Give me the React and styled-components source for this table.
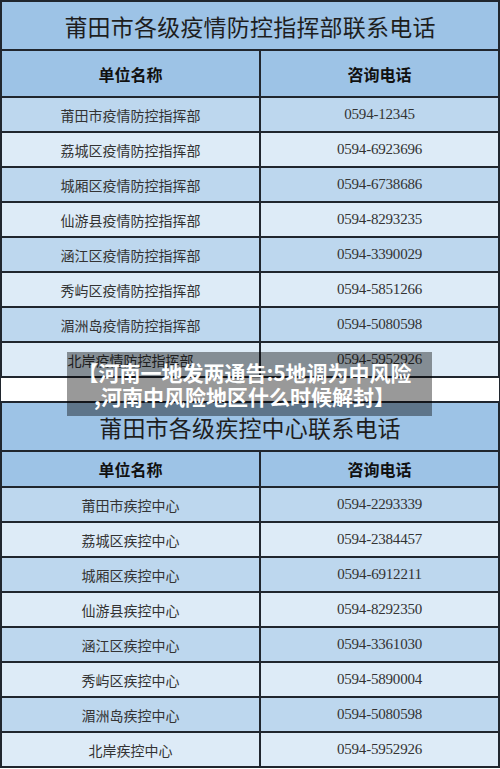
import React from "react";
import styled, { createGlobalStyle } from "styled-components";

const Global = createGlobalStyle`
  html, body { margin: 0; padding: 0; background: #ffffff; }
  body { font-family: "Noto Sans CJK SC", "Noto Sans", sans-serif; }
`;

const LINE = "#20262e";

const Page = styled.div`
  position: relative;
  width: 500px;
`;

const Table = styled.section`
  border: 2px solid ${LINE};
  display: flex;
  flex-direction: column;
`;

const TitleRow = styled.div`
  height: 47px;
  background: #9dc3e6;
  border-bottom: 2px solid ${LINE};
  display: flex;
  align-items: center;
  justify-content: center;
  font-size: 23px;
  color: #1e1e1e;
  font-weight: 400;
  letter-spacing: 0.2px;
`;

const Row = styled.div`
  display: grid;
  grid-template-columns: 259px 1fr;
  height: ${(p) => p.$h}px;
  background: ${(p) => p.$bg};
  border-bottom: 2px solid ${LINE};
  &:last-child { border-bottom: none; }
`;

const Cell = styled.div`
  display: flex;
  align-items: center;
  justify-content: center;
  box-sizing: border-box;
  &:first-child { border-right: 2px solid ${LINE}; }
`;

const HeadText = styled.span`
  font-size: 16px;
  font-weight: 700;
  color: #111;
`;

const NameText = styled.span`
  font-size: 14px;
  color: #333;
  font-weight: 400;
`;

const PhoneText = styled.span`
  font-family: "Liberation Serif", "DejaVu Serif", serif;
  font-size: 15px;
  color: #333;
  letter-spacing: -0.2px;
`;

const Gap = styled.div`
  height: 23px;
  background: #fff;
  border-left: 1px solid ${LINE};
  border-right: 1px solid ${LINE};
`;

const Caption = styled.div`
  position: absolute;
  left: 67px;
  top: 352px;
  width: 365px;
  height: 64px;
  box-sizing: border-box;
  padding: 8px 10px 8px 0;
  background: rgba(0, 0, 0, 0.4);
  color: #fff;
  font-family: "Noto Sans CJK SC", "Noto Sans", sans-serif;
  font-weight: 700;
  font-size: 21px;
  line-height: 24px;
  text-align: center;
`;

const CaptionLine = styled.span`
  display: block;
  white-space: nowrap;
`;

const DARK = "#bdd7ee";
const LIGHT = "#ddebf7";

const table1 = [
  ["莆田市疫情防控指挥部", "0594-12345"],
  ["荔城区疫情防控指挥部", "0594-6923696"],
  ["城厢区疫情防控指挥部", "0594-6738686"],
  ["仙游县疫情防控指挥部", "0594-8293235"],
  ["涵江区疫情防控指挥部", "0594-3390029"],
  ["秀屿区疫情防控指挥部", "0594-5851266"],
  ["湄洲岛疫情防控指挥部", "0594-5080598"],
  ["北岸疫情防控指挥部", "0594-5952926"],
];

const table2 = [
  ["莆田市疾控中心", "0594-2293339"],
  ["荔城区疾控中心", "0594-2384457"],
  ["城厢区疾控中心", "0594-6912211"],
  ["仙游县疾控中心", "0594-8292350"],
  ["涵江区疾控中心", "0594-3361030"],
  ["秀屿区疾控中心", "0594-5890004"],
  ["湄洲岛疾控中心", "0594-5080598"],
  ["北岸疾控中心", "0594-5952926"],
];

function ContactTable({ title, headH, rows }) {
  return (
    <Table>
      <TitleRow>{title}</TitleRow>
      <Row $h={headH} $bg="#9dc3e6">
        <Cell><HeadText>单位名称</HeadText></Cell>
        <Cell><HeadText>咨询电话</HeadText></Cell>
      </Row>
      {rows.map(([name, phone], i) => (
        <Row key={name} $h={33} $bg={i % 2 === 0 ? DARK : LIGHT}>
          <Cell><NameText>{name}</NameText></Cell>
          <Cell><PhoneText>{phone}</PhoneText></Cell>
        </Row>
      ))}
    </Table>
  );
}

export default function App() {
  return (
    <>
      <Global />
      <Page>
        <ContactTable title="莆田市各级疫情防控指挥部联系电话" headH={45} rows={table1} />
        <Gap />
        <ContactTable title="莆田市各级疾控中心联系电话" headH={34} rows={table2} />
        <Caption>
          <CaptionLine>【河南一地发两通告:5地调为中风险</CaptionLine>
          <CaptionLine>,河南中风险地区什么时候解封】</CaptionLine>
        </Caption>
      </Page>
    </>
  );
}
